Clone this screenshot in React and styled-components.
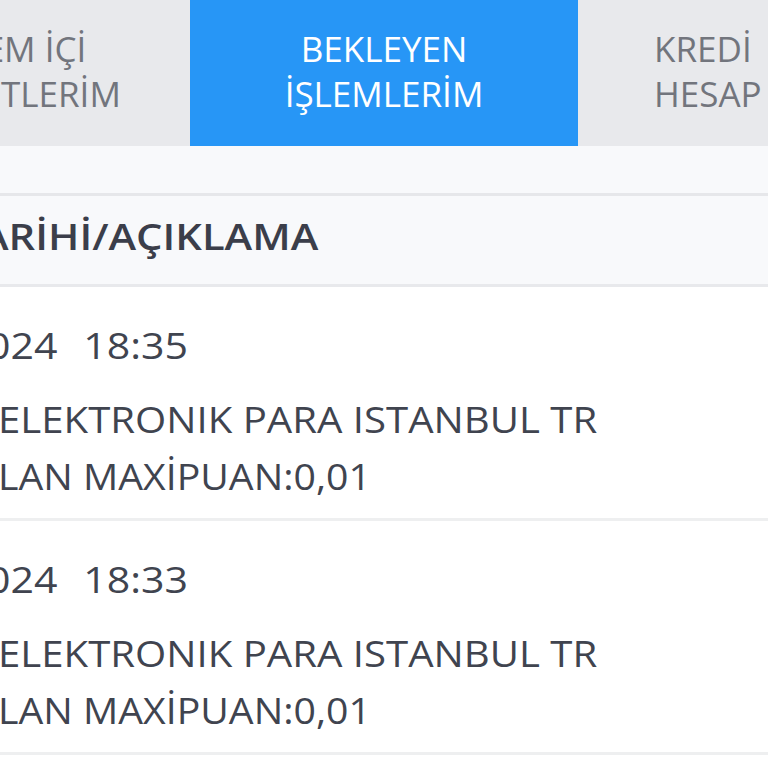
import React from 'react';
import styled, { createGlobalStyle } from 'styled-components';

const Global = createGlobalStyle`
  html, body { margin: 0; padding: 0; background: #ffffff; }
  body { font-family: "Open Sans", "Noto Sans", sans-serif; }
`;

const Viewport = styled.div`
  width: 768px;
  height: 768px;
  overflow: hidden;
  background: #ffffff;
`;

const TabBar = styled.div`
  display: flex;
  height: 146px;
  width: 1164px;
  margin-left: -198px;
`;

const Tab = styled.div`
  flex: 0 0 388px;
  display: flex;
  align-items: center;
  justify-content: ${(p) => (p.$left ? 'flex-start' : 'center')};
  text-align: ${(p) => (p.$left ? 'left' : 'center')};
  box-sizing: border-box;
  padding: 0 0 5px ${(p) => p.$left || 0}px;
  background: ${(p) => (p.$active ? '#2796f6' : '#e8e9ec')};
  color: ${(p) => (p.$active ? '#ffffff' : '#72757d')};
  font-size: 35px;
  line-height: 45px;
`;

const Spacer = styled.div`
  height: 47px;
  background: #f8f9fb;
`;

const HeaderRow = styled.div`
  box-sizing: border-box;
  height: 94px;
  padding-top: 13px;
  border-top: 3px solid #e6e7ea;
  border-bottom: 3px solid #e8e9ec;
  background: #f8f9fb;
`;

const Stretch = styled.div`
  transform-origin: left center;
  transform: scaleX(${(p) => p.$sx || 1});
  margin-left: ${(p) => p.$shift || 0}px;
  white-space: pre;
`;

const HeaderText = styled(Stretch)`
  font-size: 36px;
  font-weight: 600;
  line-height: 56px;
  color: #3b3e4a;
`;

const Row = styled.div`
  padding: 33px 0 14px;
  border-bottom: 3px solid #eeeff0;
  background: #ffffff;
`;

const DateLine = styled(Stretch)`
  font-size: 37px;
  line-height: 50px;
  color: #40444f;
  word-spacing: 2px;
`;

const Desc = styled.div`
  margin-top: 20px;
  font-size: 37px;
  line-height: 57px;
  color: #40444f;
`;

const rows = [
  { time: '024  18:35' },
  { time: '024  18:33' },
];

export default function App() {
  return (
    <Viewport>
      <Global />
      <TabBar>
        <Tab>
          DÖNEM İÇİ
          <br />
          HAREKETLERİM
        </Tab>
        <Tab $active>
          BEKLEYEN
          <br />
          İŞLEMLERİM
        </Tab>
        <Tab $left={76}>
          KREDİ
          <br />
          HESAP ÖZETİ
        </Tab>
      </TabBar>
      <Spacer />
      <HeaderRow>
        <HeaderText $shift={-19} $sx={1.16}>ARİHİ/AÇIKLAMA</HeaderText>
      </HeaderRow>
      {rows.map((r) => (
        <Row key={r.time}>
          <DateLine $shift={-13} $sx={1.11}>{r.time}</DateLine>
          <Desc>
            <Stretch $shift={-2} $sx={1.085}>ELEKTRONIK PARA ISTANBUL TR</Stretch>
            <Stretch $shift={-2} $sx={1.06}>LAN MAXİPUAN:0,01</Stretch>
          </Desc>
        </Row>
      ))}
    </Viewport>
  );
}
